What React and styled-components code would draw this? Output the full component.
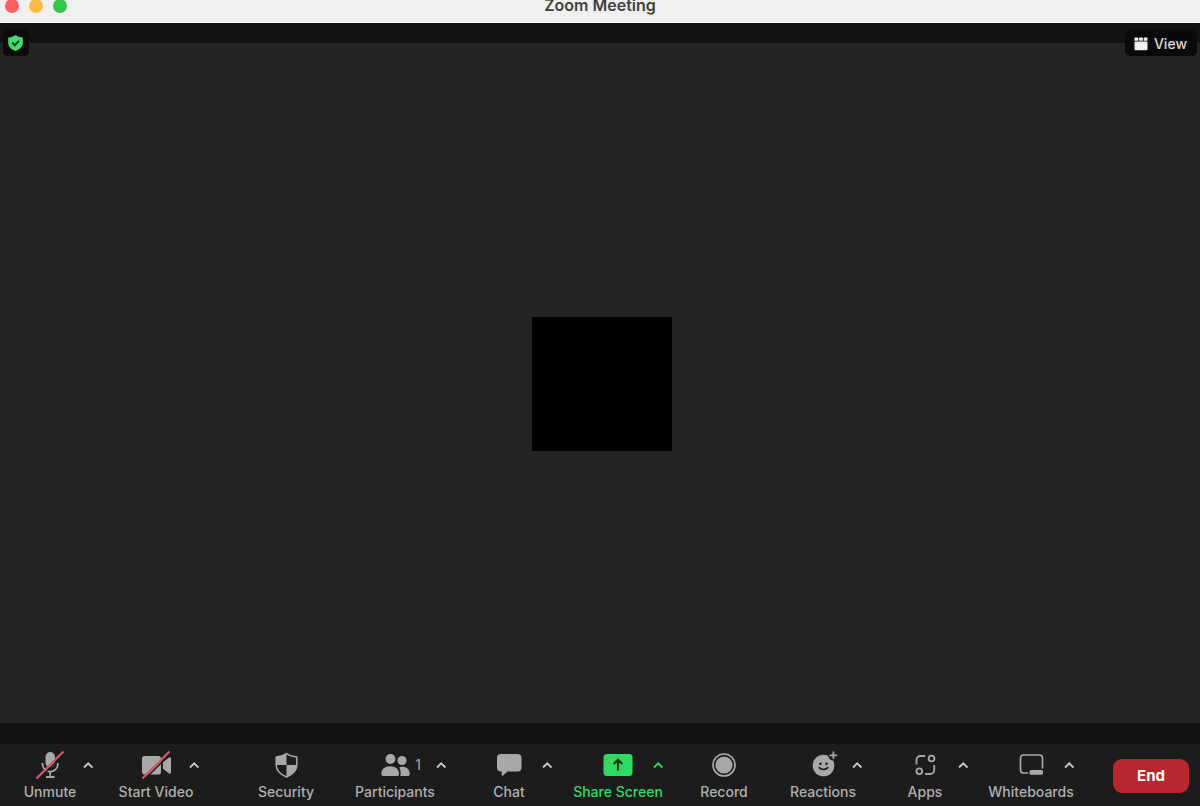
import React from 'react';
import styled, { createGlobalStyle, ThemeProvider } from 'styled-components';

const theme = {
  color: {
    titleBar: '#f0f0f0',
    titleText: '#3f3f3f',
    strip: '#121212',
    stage: '#242424',
    toolbar: '#1c1c1c',
    overlay: '#0a0a0a',
    icon: '#a8a8a8',
    label: '#b0b0b0',
    caret: '#c8c8c8',
    green: '#2edb5e',
    slash: '#d9566b',
    end: '#b6282e',
  },
  font: 'Inter, "Liberation Sans", sans-serif',
};

const GlobalStyle = createGlobalStyle`
  * {
    box-sizing: border-box;
  }
  body {
    margin: 0;
    background: ${theme.color.stage};
    font-family: ${theme.font};
  }
  button {
    margin: 0;
    padding: 0;
    border: 0;
    background: none;
    font: inherit;
    cursor: pointer;
  }
  svg {
    display: block;
  }
`;

const Window = styled.div`
  display: flex;
  flex-direction: column;
  height: 100vh;
  overflow: hidden;
`;

const TitleBar = styled.header`
  display: grid;
  grid-template-columns: 1fr auto 1fr;
  height: 23px;
  background: ${({ theme }) => theme.color.titleBar};
  border-bottom: 1px solid #fafafa;
`;

const TrafficLights = styled.div`
  display: flex;
  align-items: center;
  gap: 10px;
  height: 12px;
  padding-left: 5px;
`;

const TrafficLight = styled.button`
  flex: none;
  width: 14px;
  height: 14px;
  border-radius: 50%;
  background: ${({ $color }) => $color};
`;

const Title = styled.h1`
  margin: 0;
  font-size: 16px;
  font-weight: 600;
  line-height: 10px;
  color: ${({ theme }) => theme.color.titleText};
`;

const Stage = styled.main`
  position: relative;
  flex: 1;
  display: flex;
  align-items: center;
  justify-content: center;
  padding: 2px 0 0 4px;
  background: ${({ theme }) => theme.color.stage};
  border-top: 20px solid ${({ theme }) => theme.color.strip};
  border-bottom: 21px solid ${({ theme }) => theme.color.strip};
`;

const VideoTile = styled.div`
  width: 140px;
  height: 134px;
  background: #000;
`;

const OverlayButton = styled.button`
  position: absolute;
  top: -13px;
  ${({ $side }) => $side}: 3px;
  display: flex;
  align-items: center;
  justify-content: center;
  gap: 6px;
  height: 26px;
  min-width: 26px;
  padding: ${({ $wide }) => ($wide ? '1px 10px 0 9px' : '0')};
  border-radius: 5px;
  font-size: 14px;
  font-weight: 500;
  line-height: 20px;
  color: #dcdcdc;
  background: ${({ theme }) => theme.color.overlay};
`;

const Toolbar = styled.footer`
  display: flex;
  height: 62px;
  padding-right: 11px;
  background: ${({ theme }) => theme.color.toolbar};
`;

const ToolGroup = styled.div`
  display: flex;
  flex: ${({ $grow }) => $grow} 1 0;
`;

const Tool = styled.div`
  display: grid;
  flex: ${({ $grow }) => $grow} 1 0;
  grid-template-columns: minmax(0, 1fr);
  grid-template-rows: 32px 21px;
  align-content: start;
  padding-top: 5px;
  color: ${({ theme, $active }) => ($active ? theme.color.green : theme.color.icon)};
`;

const ToolButton = styled.button`
  grid-area: 1 / 1 / 3 / 2;
  display: flex;
  flex-direction: column;
  align-items: center;
  color: inherit;
`;

const ToolLabel = styled.span`
  font-size: 14px;
  font-weight: 500;
  line-height: 20px;
  padding-top: 1px;
  white-space: nowrap;
  color: ${({ theme, $active }) => ($active ? theme.color.green : theme.color.label)};
`;

const Beside = styled.span`
  grid-area: 1 / 1 / 2 / 2;
  align-self: center;
  justify-self: center;
  margin-left: ${({ $offset }) => $offset * 2}px;
`;

const Count = styled(Beside)`
  font-size: 14px;
  line-height: 20px;
  pointer-events: none;
`;

const Caret = styled(Beside)`
  display: flex;
  align-items: center;
  justify-content: center;
  width: 16px;
  height: 20px;
  color: ${({ theme, $active }) => ($active ? theme.color.green : theme.color.caret)};
`;

const EndSlot = styled.div`
  display: flex;
  align-items: center;
  padding-top: 1px;
  margin-left: 35px;
`;

const EndButton = styled.button`
  width: 76px;
  height: 34px;
  border-radius: 9px;
  font-size: 15px;
  font-weight: 700;
  color: #fff;
  background: ${({ theme }) => theme.color.end};
`;

const Icon = ({ children }) => (
  <svg width="32" height="32" viewBox="0 0 32 32" fill="none" aria-hidden="true">
    {children}
  </svg>
);

const Slash = () => (
  <>
    <path d="M4 31 31 4" stroke={theme.color.toolbar} strokeWidth="1.5" />
    <path d="M2.5 29.5 29.5 2.5" stroke={theme.color.slash} strokeWidth="2.2" />
  </>
);

const MicIcon = () => (
  <Icon>
    <rect x="11.5" y="3" width="9.5" height="15.5" rx="4.7" fill="currentColor" />
    <path d="M8.5 14v1a7.7 7.7 0 0 0 15.4 0v-1M16.2 22.5V28M12 28h8.5" stroke="currentColor" strokeWidth="1.8" />
    <Slash />
  </Icon>
);

const VideoIcon = () => (
  <Icon>
    <rect x="2" y="7" width="19" height="18.5" rx="2.5" fill="currentColor" />
    <path d="M23 13.2 29 8.6q2-1.2 2 1v13.8q0 2.2-2 1L23 19.8z" fill="currentColor" />
    <Slash />
  </Icon>
);

const SecurityIcon = () => (
  <Icon>
    <path d="M16.5 4.5c3 2.3 6.4 3.3 10.3 3.6v8c0 5.6-4 9.4-10.3 11.9C10.2 25.5 6.2 21.7 6.2 16.1v-8c3.9-.3 7.3-1.3 10.3-3.6z" stroke="currentColor" strokeWidth="1.5" />
    <path d="M16.5 4.5V16H6.2V8.1c3.9-.3 7.3-1.3 10.3-3.6zM16.5 16h10.3c0 5.6-4 9.5-10.3 12z" fill="currentColor" />
  </Icon>
);

const ParticipantsIcon = () => (
  <Icon>
    <g fill="currentColor">
      <circle cx="11.5" cy="10" r="5" />
      <circle cx="23" cy="11.5" r="4.6" />
      <path d="M2.3 25c0-5 3.6-7.8 8.9-7.8s8.9 2.8 8.9 7.8q0 2-2 2H4.3q-2 0-2-2z" />
      <path d="M20.2 18.2c.9-.4 1.9-.5 3-.5 4.6 0 7.6 2.6 7.6 7.3q0 2-2 2h-7.6q.5-.8.5-2.2c0-2.700-.4-4.800-1.500-6.600z" />
    </g>
  </Icon>
);

const ChatIcon = () => (
  <Icon>
    <path d="M8 5h16.500a4 4 0 0 1 4 4v9.500a4 4 0 0 1-4 4H14.500L10 26.600q-1.300.9-1.300-.8v-3.300H8a4 4 0 0 1-4-4V9a4 4 0 0 1 4-4z" fill="currentColor" />
  </Icon>
);

const ShareIcon = () => (
  <Icon>
    <rect x="1.5" y="5" width="29" height="22" rx="3.5" fill="currentColor" />
    <path d="M16 21.5v-10M11.6 15 16 10.8l4.4 4.200" stroke="#123a1c" strokeWidth="2.2" />
  </Icon>
);

const RecordIcon = () => (
  <Icon>
    <circle cx="16" cy="16" r="11" stroke="currentColor" strokeWidth="1.7" />
    <circle cx="16" cy="16" r="8.6" fill="currentColor" />
  </Icon>
);

const ReactionsIcon = () => (
  <Icon>
    <circle cx="16.5" cy="16.5" r="10.8" fill="currentColor" />
    <circle cx="26.4" cy="6.3" r="5.2" fill={theme.color.toolbar} />
    <path d="M26.4 2.5v7.6M22.6 6.3h7.600" stroke="currentColor" strokeWidth="1.7" />
    <circle cx="13.5" cy="14.8" r="1.3" fill={theme.color.toolbar} />
    <circle cx="19.5" cy="14.8" r="1.3" fill={theme.color.toolbar} />
    <path d="M12 18.2c1.400 3 7.600 3 9 0" stroke={theme.color.toolbar} strokeWidth="1.6" />
  </Icon>
);

const AppsIcon = () => (
  <Icon>
    <g stroke="currentColor" strokeWidth="1.8">
      <path d="M7.5 15.5V11a4 4 0 0 1 4-4h4.7" />
      <path d="M25.2 16v5a4 4 0 0 1-4 4h-5" />
      <circle cx="22.5" cy="9.5" r="2.9" />
      <circle cx="10.3" cy="22.2" r="2.9" />
    </g>
  </Icon>
);

const WhiteboardsIcon = () => (
  <Icon>
    <path d="M13 24H8.500a3 3 0 0 1-3-3V9a3 3 0 0 1 3-3h16a3 3 0 0 1 3 3v10.500" stroke="currentColor" strokeWidth="1.7" />
    <rect x="14.5" y="21" width="13.5" height="4.800" rx="1.5" fill="currentColor" />
  </Icon>
);

const CaretIcon = () => (
  <svg width="10" height="8" viewBox="0 0 10 8" fill="none" aria-hidden="true">
    <path d="M1 6.5 5.2 2.3l4.2 4.2" stroke="currentColor" strokeWidth="1.8" />
  </svg>
);

const ShieldCheckIcon = () => (
  <svg width="16" height="18" viewBox="0 0 16 18" fill="none" aria-hidden="true">
    <path d="M7.5 1c2.1 1.5 4.4 2.2 7.3 2.4v5.4c0 4-2.9 6.5-7.3 8.2C3.1 15.3.2 12.8.2 8.8V3.4C3.1 3.2 5.4 2.5 7.5 1z" fill="#3ddc6c" />
    <path d="m4.2 8.7 2.6 2.6L11 6.9" stroke="#06280f" strokeWidth="1.8" />
  </svg>
);

const GalleryIcon = () => (
  <svg width="14" height="14" viewBox="0 0 14 14" fill="#f2f2f2" aria-hidden="true">
    <rect x="0.5" y="0.5" width="3.8" height="3.2" rx="0.5" />
    <rect x="5.1" y="0.5" width="3.8" height="3.2" rx="0.5" />
    <rect x="9.7" y="0.5" width="3.8" height="3.2" rx="0.5" />
    <rect x="0.5" y="4.5" width="13" height="8.8" rx="1" />
  </svg>
);

// grow keeps the relative widths of the tools; caret is the distance from the tool's centre
const mediaTools = [
  { label: 'Unmute', icon: MicIcon, grow: 100, caret: 38 },
  { label: 'Start Video', icon: VideoIcon, grow: 112, caret: 38 },
];

const meetingTools = [
  { label: 'Security', icon: SecurityIcon, grow: 108 },
  { label: 'Participants', icon: ParticipantsIcon, grow: 110, caret: 46, count: 1 },
  { label: 'Chat', icon: ChatIcon, grow: 118, caret: 38 },
  { label: 'Share Screen', icon: ShareIcon, grow: 100, caret: 40, active: true },
  { label: 'Record', icon: RecordIcon, grow: 112 },
  { label: 'Reactions', icon: ReactionsIcon, grow: 86, caret: 34 },
  { label: 'Apps', icon: AppsIcon, grow: 118, caret: 38 },
  { label: 'Whiteboards', icon: WhiteboardsIcon, grow: 94, caret: 38 },
];

const ToolItem = ({ label, icon: ToolIcon, grow, caret, count, active = false }) => (
  <Tool $grow={grow} $active={active}>
    <ToolButton type="button">
      <ToolIcon />
      <ToolLabel $active={active}>{label}</ToolLabel>
    </ToolButton>
    {count && <Count $offset={23}>{count}</Count>}
    {caret && (
      <Caret as="button" type="button" aria-label={`${label} options`} $offset={caret} $active={active}>
        <CaretIcon />
      </Caret>
    )}
  </Tool>
);

const App = () => (
  <ThemeProvider theme={theme}>
    <GlobalStyle />
    <Window>
      <TitleBar>
        <TrafficLights>
          <TrafficLight type="button" aria-label="Close" $color="#fc5f5f" />
          <TrafficLight type="button" aria-label="Minimize" $color="#fdb941" />
          <TrafficLight type="button" aria-label="Zoom" $color="#33c748" />
        </TrafficLights>
        <Title>Zoom Meeting</Title>
      </TitleBar>
      <Stage>
        <OverlayButton type="button" aria-label="Meeting information" $side="left">
          <ShieldCheckIcon />
        </OverlayButton>
        <VideoTile />
        <OverlayButton type="button" $side="right" $wide>
          <GalleryIcon />
          View
        </OverlayButton>
      </Stage>
      <Toolbar>
        <ToolGroup $grow={232}>
          {mediaTools.map(tool => <ToolItem key={tool.label} {...tool} />)}
          <ToolGroup $grow={20} />
        </ToolGroup>
        <ToolGroup $grow={846}>
          {meetingTools.map(tool => <ToolItem key={tool.label} {...tool} />)}
        </ToolGroup>
        <EndSlot>
          <EndButton type="button">End</EndButton>
        </EndSlot>
      </Toolbar>
    </Window>
  </ThemeProvider>
);

export default App;
